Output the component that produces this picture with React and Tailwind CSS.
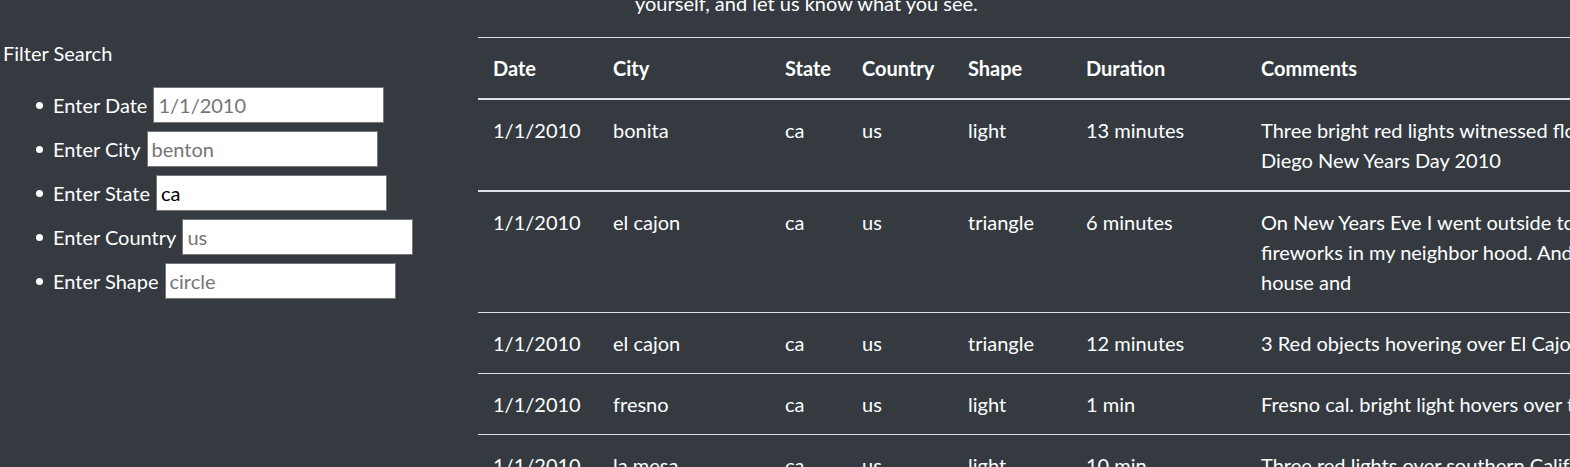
import React from "react";

const rows = [
  { date: "1/1/2010", city: "bonita", state: "ca", country: "us", shape: "light", duration: "13 minutes", lines: ["Three bright red lights witnessed floating in a stationary position over San", "Diego New Years Day 2010"] },
  { date: "1/1/2010", city: "el cajon", state: "ca", country: "us", shape: "triangle", duration: "6 minutes", lines: ["On New Years Eve I went outside to watch and listen to the", "fireworks in my neighbor hood. And I saw three red lights above my", "house and"] },
  { date: "1/1/2010", city: "el cajon", state: "ca", country: "us", shape: "triangle", duration: "12 minutes", lines: ["3 Red objects hovering over El Cajon, California"] },
  { date: "1/1/2010", city: "fresno", state: "ca", country: "us", shape: "light", duration: "1 min", lines: ["Fresno cal. bright light hovers over the city then takes off"] },
  { date: "1/1/2010", city: "la mesa", state: "ca", country: "us", shape: "light", duration: "10 min", lines: ["Three red lights over southern California in a triangle"] },
];

const filters = [
  { label: "Enter Date", placeholder: "1/1/2010" },
  { label: "Enter City", placeholder: "benton" },
  { label: "Enter State", placeholder: "ca", value: "ca" },
  { label: "Enter Country", placeholder: "us" },
  { label: "Enter Shape", placeholder: "circle" },
];

export default function App() {
  return (
    <div
      className="w-[1570px] h-[467px] overflow-hidden bg-[#343a40] text-white text-[20px] leading-[30px]"
      style={{ fontFamily: '"Segoe UI", Lato, "Liberation Sans", sans-serif' }}
    >
      <div className="flex">
        <div className="w-[478px] shrink-0 pt-[38px]">
          <div className="pl-[3px]">Filter Search</div>
          <ul className="mt-[19px] pl-[36px] flex flex-col">
            {filters.map((f) => (
              <li key={f.label} className="h-[44px] flex items-start">
                <span className="mt-[15px] w-[7px] h-[7px] rounded-full bg-white shrink-0"></span>
                <span className="ml-[10px] mt-[3px] whitespace-nowrap">{f.label}</span>
                <input
                  readOnly
                  defaultValue={f.value || ""}
                  placeholder={f.placeholder}
                  className="ml-[6px] w-[231px] h-[36px] bg-white border border-[#767676] px-[4px] text-[20px] text-black placeholder:text-[#757575] outline-none"
                  style={{ fontFamily: '"Segoe UI", Lato, "Liberation Sans", sans-serif' }}
                />
              </li>
            ))}
          </ul>
        </div>
        <div className="flex-1 min-w-0 overflow-hidden">
          <div className="h-[18px] overflow-hidden pl-[157px]">
            <div className="mt-[-12px] whitespace-nowrap">yourself, and let us know what you see.</div>
          </div>
          <table className="mt-[19px] table-fixed w-[1500px] border-collapse text-left">
            <colgroup>
              <col className="w-[120px]" />
              <col className="w-[172px]" />
              <col className="w-[77px]" />
              <col className="w-[106px]" />
              <col className="w-[118px]" />
              <col className="w-[175px]" />
              <col />
            </colgroup>
            <thead>
              <tr className="border-t border-[#dee2e6] border-b-2">
                {["Date", "City", "State", "Country", "Shape", "Duration", "Comments"].map((h) => (
                  <th key={h} className="px-[15px] py-[15px] font-bold align-bottom whitespace-nowrap">{h}</th>
                ))}
              </tr>
            </thead>
            <tbody>
              {rows.map((r, i) => (
                <tr key={i} className={i === 0 ? "border-b-2 border-[#dee2e6]" : "border-b border-[#dee2e6]"}>
                  <td className="px-[15px] py-[15px] align-top whitespace-nowrap">{r.date}</td>
                  <td className="px-[15px] py-[15px] align-top whitespace-nowrap">{r.city}</td>
                  <td className="px-[15px] py-[15px] align-top whitespace-nowrap">{r.state}</td>
                  <td className="px-[15px] py-[15px] align-top whitespace-nowrap">{r.country}</td>
                  <td className="px-[15px] py-[15px] align-top whitespace-nowrap">{r.shape}</td>
                  <td className="px-[15px] py-[15px] align-top whitespace-nowrap">{r.duration}</td>
                  <td className="px-[15px] py-[15px] align-top whitespace-nowrap">
                    {r.lines.map((l, j) => (
                      <div key={j}>{l}</div>
                    ))}
                  </td>
                </tr>
              ))}
            </tbody>
          </table>
        </div>
      </div>
    </div>
  );
}
